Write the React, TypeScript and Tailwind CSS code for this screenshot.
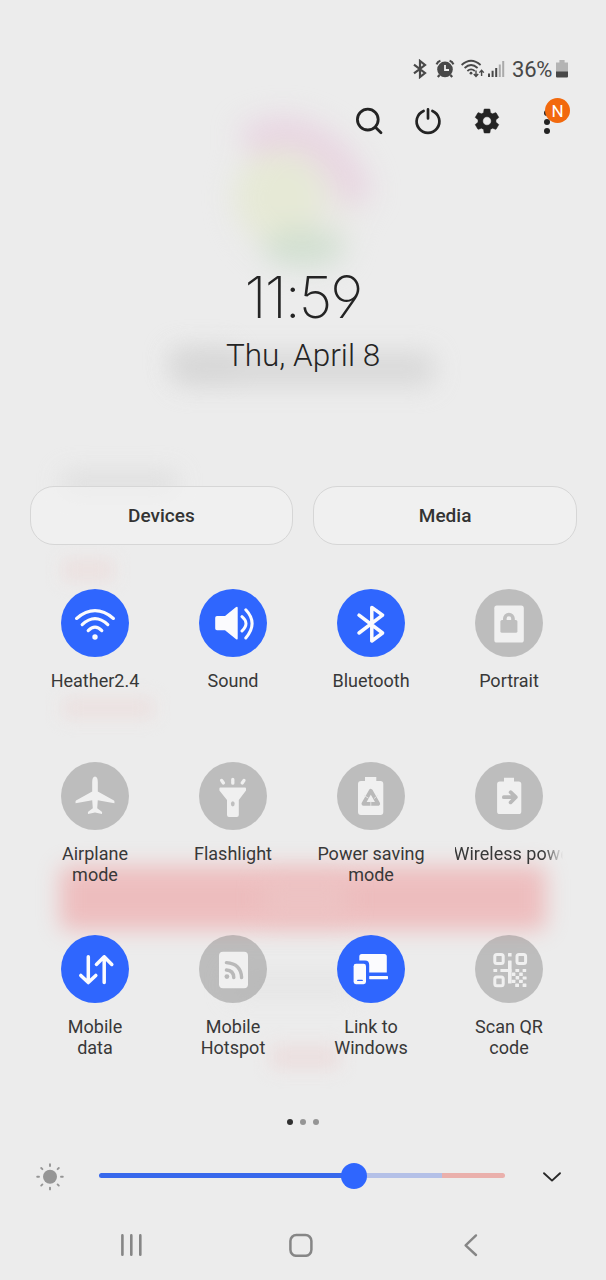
import type { ReactNode } from "react";

const QR_BITS: [number, number, number, number][] = [
  [33, 18, 3.6, 3.4],
  [33, 25.6, 3.6, 23],
  [25.4, 34, 11, 3],
  [18.4, 34, 3.8, 3],
  [40.4, 34, 3.8, 3],
  [47.6, 34, 3.6, 3],
  [36.8, 37.4, 3.6, 3.6],
  [44.2, 37.4, 3.6, 3.6],
  [40.6, 41, 3.6, 3.6],
  [47.6, 41.6, 4, 3],
  [36.6, 44.8, 3.8, 3.2],
  [44, 44.8, 3.8, 3.2],
  [40.2, 48.4, 3.8, 3.6],
  [47.6, 48.6, 3.8, 3.4],
];

const icons: Record<string, ReactNode> = {
  wifi: (
    <g fill="none" stroke="currentColor" strokeWidth="3.2" strokeLinecap="round">
      <path d="M15.6 29.4Q34 14 52.4 29.4" />
      <path d="M21.2 35.6Q34 23.6 46.8 35.6" />
      <path d="M27.2 41.6Q34 34.6 40.8 41.6" />
      <circle cx="34" cy="48" r="2.7" fill="currentColor" stroke="none" />
    </g>
  ),
  sound: (
    <g>
      <path d="M18 27H26L36.8 18.2Q38.7 17 38.7 19V49.5Q38.7 51.4 36.8 50L26 41.2H18Q16.2 41.2 16.2 39.4V28.8Q16.2 27 18 27Z" fill="currentColor" />
      <path d="M43 27.6Q51 34.2 43 42M46.8 20.8Q59.4 34.2 46.8 49" fill="none" stroke="currentColor" strokeWidth="3" strokeLinecap="round" />
    </g>
  ),
  bluetooth: (
    <path d="M22 26.2L45.6 44L34.8 52V18.4L45.6 26.2L22 44" fill="none" stroke="currentColor" strokeWidth="3.5" strokeLinecap="round" strokeLinejoin="round" />
  ),
  portrait: (
    <g>
      <rect x="19.3" y="16.6" width="29.5" height="37" rx="2.6" fill="currentColor" />
      <rect x="25.4" y="31" width="17" height="12.8" rx="1.6" fill="#bfbfbf" />
      <path d="M29.8 32V29.6a4.1 4.1 0 0 1 8.2 0V32" fill="none" stroke="#bfbfbf" strokeWidth="3.6" />
    </g>
  ),
  airplane: (
    <path d="M34 14.6Q36.8 15 36.8 20V29.4L53 38.6Q53.8 39.4 53.4 41.2L36.8 38.2L36.2 46.3L40.6 49.6Q41.4 50.6 41 52L34 50.4L27 52Q26.6 50.6 27.4 49.6L31.8 46.3L31.2 38.2L14.6 41.2Q14.2 39.4 15 38.6L31.2 29.4V20Q31.2 15 34 14.6Z" fill="currentColor" />
  ),
  flashlight: (
    <g>
      <path d="M21.4 25.6H46Q47 25.6 47 26.6V28.6L39.8 38V53Q39.8 55 37.8 55H30Q28 55 28 53V38L20.4 28.6V26.6Q20.4 25.6 21.4 25.6Z" fill="currentColor" />
      <ellipse cx="33.8" cy="41.8" rx="1.9" ry="2.6" fill="#bfbfbf" />
      <path d="M33.8 17.4V21.2M22.6 18.4L24.4 21M45 18.4L43.2 21" stroke="currentColor" strokeWidth="3.3" strokeLinecap="round" />
    </g>
  ),
  powersave: (
    <g>
      <path d="M28 15H39.3V19H43.4Q46.3 19 46.3 22V50Q46.3 53 43.4 53H24Q21 53 21 50V22Q21 19 24 19H28Z" fill="currentColor" />
      <path d="M33.8 28.8L41.2 41.8H26.4Z" fill="none" stroke="#b9b9b9" strokeWidth="3.8" strokeLinejoin="round" />
      <path d="M27.2 33.6L31.6 36.2M40.6 33.6L37 36.6M33.8 39.6V44" stroke="#e2e2e2" strokeWidth="1" />
    </g>
  ),
  wireless: (
    <g>
      <path d="M29 15.8H39V19.4H43.6Q46.3 19.4 46.3 22V49.4Q46.3 52 43.6 52H24.8Q22.1 52 22.1 49.4V22Q22.1 19.4 24.8 19.4H29Z" fill="currentColor" />
      <path d="M28.8 35.2H40.4M35.6 30.2L40.8 35.2L35.6 40.4" fill="none" stroke="#b9b9b9" strokeWidth="3.7" strokeLinecap="round" strokeLinejoin="round" />
    </g>
  ),
  data: (
    <path d="M27.3 21.8V47.4M19.8 40.4L27.3 47.6L34.8 40.4M43.2 47.6V21.8M35.4 29.4L43.2 21.8L50.8 29.4" fill="none" stroke="currentColor" strokeWidth="3.5" strokeLinecap="round" strokeLinejoin="round" />
  ),
  hotspot: (
    <g>
      <rect x="20" y="16.8" width="29" height="36.4" rx="4" fill="currentColor" />
      <circle cx="27.9" cy="41.6" r="2.4" fill="#b9b9b9" />
      <path d="M27.4 35Q34.6 35.4 34.8 42.6M27.4 27.6Q42 28.6 42.6 42.6" fill="none" stroke="#b9b9b9" strokeWidth="3.4" strokeLinecap="round" />
    </g>
  ),
  link: (
    <g fill="currentColor">
      <path d="M22.3 25.4V21.5Q22.3 19 24.8 19H47.3Q49.8 19 49.8 21.5V37.4H32.2V29.8Q32.2 25.4 28 25.4Z" />
      <rect x="16.6" y="28.8" width="12.4" height="20.4" rx="2.4" />
      <path d="M20.8 45.4H25.2" stroke="#2f66fe" strokeWidth="1.4" strokeLinecap="round" />
      <rect x="32.2" y="41" width="18.8" height="3.2" rx="0.6" />
    </g>
  ),
  qr: (
    <g>
      <g fill="none" stroke="currentColor" strokeWidth="3">
        <rect x="19.8" y="19.6" width="8.4" height="9" rx="2" />
        <rect x="42" y="19.6" width="8.6" height="9" rx="2" />
        <rect x="19.8" y="42" width="8.4" height="8.8" rx="2" />
      </g>
      {QR_BITS.map(([x, y, w, h]) => (
        <rect key={`${x}-${y}`} x={x} y={y} width={w} height={h} rx="0.5" fill="currentColor" />
      ))}
    </g>
  ),
};

type Tile = { icon: string; lines: string[]; on?: boolean; faded?: boolean };

const tiles: Tile[] = [
  { icon: "wifi", lines: ["Heather2.4"], on: true },
  { icon: "sound", lines: ["Sound"], on: true },
  { icon: "bluetooth", lines: ["Bluetooth"], on: true },
  { icon: "portrait", lines: ["Portrait"] },
  { icon: "airplane", lines: ["Airplane", "mode"] },
  { icon: "flashlight", lines: ["Flashlight"] },
  { icon: "powersave", lines: ["Power saving", "mode"] },
  { icon: "wireless", lines: ["Wireless powe"], faded: true },
  { icon: "data", lines: ["Mobile", "data"], on: true },
  { icon: "hotspot", lines: ["Mobile", "Hotspot"] },
  { icon: "link", lines: ["Link to", "Windows"], on: true },
  { icon: "qr", lines: ["Scan QR", "code"] },
];

function Backdrop() {
  return (
    <div className="pointer-events-none absolute inset-0 overflow-hidden" aria-hidden="true">
      <svg className="absolute left-[180px] top-[80px] blur-[14px]" width="250" height="220" viewBox="0 0 250 220" fill="none">
        <circle cx="116" cy="118" r="62" fill="#e9e9e4" />
        <path d="M66 64Q106 40 144 68Q172 92 176 122" stroke="#e8cbde" strokeWidth="33" opacity="0.68" />
        <circle cx="98" cy="116" r="44" fill="#e5e9d2" opacity="0.8" />
        <ellipse cx="124" cy="168" rx="42" ry="19" fill="#ccddcc" opacity="0.85" />
      </svg>
      <div className="absolute left-[168px] top-[346px] h-[30px] w-[68px] rounded-lg bg-[#d8d8d8] opacity-60 blur-[12px]" />
      <div className="absolute left-[174px] top-[352px] h-[34px] w-[260px] rounded-lg bg-[#d4d4d4] opacity-80 blur-[13px]" />
      <div className="absolute left-[62px] top-[472px] h-[22px] w-[115px] bg-[#dbdbdb] opacity-80 blur-[12px]" />
      <div className="absolute left-[62px] top-[559px] h-[22px] w-[52px] bg-[#ecdfde] opacity-90 blur-[9px]" />
      <div className="absolute left-[62px] top-[698px] h-[20px] w-[92px] bg-[#ecdfde] opacity-90 blur-[9px]" />
      <div className="absolute left-[60px] top-[866px] h-[64px] w-[486px] rounded-lg bg-[#eeb9ba] opacity-90 blur-[11px]" />
      <div className="absolute left-[262px] top-[880px] h-[38px] w-[86px] bg-[#edc8c8] opacity-60 blur-[12px]" />
      <div className="absolute left-[230px] top-[972px] h-[26px] w-[130px] bg-[#e4e4e4] opacity-70 blur-[12px]" />
      <div className="absolute left-[270px] top-[1045px] h-[24px] w-[70px] bg-[#ecdddd] opacity-90 blur-[9px]" />
    </div>
  );
}

function StatusBar() {
  return (
    <div className="flex h-[22px] items-center justify-end pr-[38px] text-[#484848]">
      <svg width="14" height="20" viewBox="0 0 14 20" fill="none" stroke="currentColor" strokeWidth="2.2">
        <path d="M1 5.6L12 14L7 18V2L12 6L1 14.4" />
      </svg>
      <svg className="ml-[8px]" width="20" height="20" viewBox="0 0 20 20">
        <circle cx="10" cy="10.4" r="7.8" fill="currentColor" />
        <path d="M1.6 5.4Q2.6 2.6 5.4 1.8M18.4 5.4Q17.4 2.6 14.6 1.8M4.6 16L2.8 18M15.4 16L17.2 18" stroke="currentColor" strokeWidth="2.2" fill="none" />
        <path d="M10 6V11H14" fill="none" stroke="#eee" strokeWidth="1.8" />
      </svg>
      <svg className="ml-[6px]" width="24" height="20" viewBox="0 0 24 20" fill="none" stroke="currentColor" strokeWidth="1.8">
        <path d="M.6 6Q10 -2.6 19.6 6M3.6 9Q10 3 16.6 9M6.4 12Q10 8.8 13.8 12" />
        <circle cx="10" cy="14.2" r="1.4" fill="currentColor" stroke="none" />
        <path d="M15 11.4V17M12.8 15L15 17.4L17.2 15M20.6 17V11.4M18.4 13.6L20.6 11.2L22.8 13.6" strokeWidth="1.4" />
      </svg>
      <svg className="ml-[3px]" width="17" height="20" viewBox="0 0 17 20">
        <path d="M1 14.6V18M4.6 11.8V18M8.2 9V18" stroke="currentColor" strokeWidth="2" />
        <path d="M11.8 5.4V18M15.2 2V18" stroke="#aaa" strokeWidth="2" />
      </svg>
      <span className="ml-[7px] w-[41px] whitespace-nowrap pt-px text-[22px] leading-[22px] tracking-[-0.2px]">36%</span>
      <svg className="ml-[3px]" width="12" height="20" viewBox="0 0 12 20">
        <path d="M3.4 1H8.6V3.4H12V13H0V3.4H3.4Z" fill="#b4b4b4" />
        <path d="M0 12.6H12V17.6Q12 18.6 11 18.6H1Q0 18.6 0 17.6Z" fill="currentColor" />
      </svg>
    </div>
  );
}

function Toolbar() {
  return (
    <div className="mt-[26px] flex h-[30px] items-center justify-end pr-[49px] text-[#232323]">
      <svg width="30" height="30" viewBox="0 0 30 30" fill="none" stroke="currentColor" strokeWidth="2.8" strokeLinecap="round">
        <circle cx="13.8" cy="13.6" r="10.4" />
        <path d="M21.4 21.2L27 26.8" />
      </svg>
      <svg className="ml-[29px]" width="30" height="30" viewBox="0 0 30 30" fill="none" stroke="currentColor" strokeWidth="2.7" strokeLinecap="round">
        <path d="M10.6 4.9a11.4 11.4 0 1 0 8.8 0M15 3.4V12.4" />
      </svg>
      <svg className="ml-[29.5px]" width="30" height="30" viewBox="0 0 24 24" fill="currentColor" stroke="currentColor" strokeWidth="0.4">
        <path d="M19.14 12.94c.04-.3.06-.61.06-.94 0-.32-.02-.64-.07-.94l2.03-1.58a.49.49 0 0 0 .12-.61l-1.92-3.32a.488.488 0 0 0-.59-.22l-2.39.96c-.5-.38-1.03-.7-1.62-.94l-.36-2.54a.484.484 0 0 0-.48-.41h-3.84c-.24 0-.43.17-.47.41l-.36 2.54c-.59.24-1.13.57-1.62.94l-2.39-.96c-.22-.08-.47 0-.59.22L2.74 8.87c-.12.21-.08.47.12.61l2.03 1.58c-.05.3-.09.63-.09.94s.02.64.07.94l-2.03 1.58a.49.49 0 0 0-.12.61l1.92 3.32c.12.22.37.29.59.22l2.39-.96c.5.38 1.03.7 1.62.94l.36 2.54c.05.24.24.41.48.41h3.84c.24 0 .44-.17.47-.41l.36-2.54c.59-.24 1.13-.56 1.62-.94l2.39.96c.22.08.47 0 .59-.22l1.92-3.32c.12-.22.07-.47-.12-.61l-2.01-1.58zM12 15.4A3.4 3.4 0 1 1 12 8.6a3.4 3.4 0 0 1 0 6.8z" />
      </svg>
      <div className="relative ml-[35px] flex h-[30px] w-[20px] flex-col items-center justify-center gap-[3px] pt-px">
        <i className="size-[6px] rounded-full bg-[#232323]" />
        <i className="size-[6px] rounded-full bg-[#232323]" />
        <i className="size-[6px] rounded-full bg-[#232323]" />
        <span className="absolute left-[8px] top-[-8px] flex size-[25px] items-center justify-center rounded-full bg-[#f2690d] pt-px text-[17px] leading-none text-white">N</span>
      </div>
    </div>
  );
}

export default function App() {
  return (
    <main className="relative h-[1280px] w-[606px] overflow-hidden bg-[#ececec] font-['Roboto',sans-serif]">
      <Backdrop />
      <div className="relative flex h-full flex-col pt-[58px]">
        <StatusBar />
        <Toolbar />
        <div className="flex flex-col items-center text-[#242424]">
          <div className="mt-[129px] flex h-[64px] items-center whitespace-nowrap font-['Inter',sans-serif] text-[58px] font-[150] leading-[64px] tracking-[-2px] [font-feature-settings:'cv04'_1,'ss01'_1]">
            11:59
          </div>
          <div className="mt-[7px] h-[40px] whitespace-nowrap text-[31.5px] font-light leading-[40px]">Thu, April 8</div>
        </div>

        <div className="mt-[110px] flex gap-[20px] pl-[29.5px] pr-[29px]">
          {["Devices", "Media"].map((label) => (
            <button key={label} className="h-[59px] flex-1 rounded-[24px] border border-[#d6d6d6] bg-[#f2f2f2]/65 pt-[2px] text-[19px] font-medium text-[#333]">
              {label}
            </button>
          ))}
        </div>

        <div className="ml-[25.5px] mt-[44px] grid w-[552px] grid-cols-4 grid-rows-[173px_173px_173px]">
          {tiles.map((tile) => (
            <div key={tile.icon} className="flex flex-col items-center">
              <div className={tile.on ? "size-[68px] rounded-full bg-[#2f66fe] text-[#fbfbfe]" : "size-[68px] rounded-full bg-[#707070]/38 text-[#f0f0f0]"}>
                <svg width="68" height="68" viewBox="0 0 68 68">{icons[tile.icon]}</svg>
              </div>
              <div
                className={
                  tile.faded
                    ? "mt-[12.5px] w-[108px] overflow-hidden whitespace-nowrap text-[18px] leading-[21.5px] text-[#383838] mask-r-from-82% mask-r-to-100%"
                    : "mt-[12.5px] whitespace-nowrap pl-px text-center text-[18px] leading-[21.5px] text-[#383838]"
                }
              >
                {tile.lines.map((line) => (
                  <div key={line} className={tile.faded ? "-ml-px" : ""}>{line}</div>
                ))}
              </div>
            </div>
          ))}
        </div>

        <div className="mt-[11px] flex justify-center gap-[7px]">
          <i className="size-[6px] rounded-full bg-[#303030]" />
          <i className="size-[6px] rounded-full bg-[#959595]" />
          <i className="size-[6px] rounded-full bg-[#959595]" />
        </div>

        <div className="mt-[34.5px] flex h-[32px] items-center">
          <svg className="ml-[34px]" width="32" height="32" viewBox="0 0 32 32" fill="#959595" stroke="#959595" strokeWidth="1.9" strokeLinecap="round">
            <circle cx="16" cy="16.8" r="7" stroke="none" />
            <path d="M16 4.2V6M16 27.6V29.4M3.2 16.8H5M27 16.8H28.8M7.2 8L8.4 9.2M23.6 24.4L24.8 25.6M24.8 8L23.6 9.2M8.4 24.4L7.2 25.6" />
          </svg>
          <div className="relative ml-[33px] flex h-[5px] w-[406px] overflow-visible">
            <div className="w-[255px] rounded-l-full bg-[#3768ec]" />
            <div className="w-[88px] bg-[#b4c0e7]" />
            <div className="flex-1 rounded-r-full bg-[#eab0ac]" />
            <i className="absolute left-[241.5px] top-[-10.5px] size-[26px] rounded-full bg-[#2f66fe]" />
          </div>
          <svg className="ml-[36px]" width="22" height="16" viewBox="0 0 22 16" fill="none" stroke="#282828" strokeWidth="1.9" strokeLinecap="round" strokeLinejoin="round">
            <path d="M3 5.2L11 12.6L19 5.2" />
          </svg>
        </div>

        <div className="mt-[41px] flex h-[50px] items-start text-[#868686]">
          <svg className="ml-[119px]" width="24" height="24" viewBox="0 0 24 24" fill="none" stroke="currentColor" strokeWidth="2.6" strokeLinecap="round">
            <path d="M3.4 2.4V21.8M12.3 2.4V21.8M21.3 2.4V21.8" />
          </svg>
          <svg className="ml-[146px]" width="24" height="24" viewBox="0 0 24 24" fill="none" stroke="currentColor" strokeWidth="2.5">
            <rect x="1.4" y="2" width="21" height="20.8" rx="6" />
          </svg>
          <svg className="ml-[148px]" width="24" height="24" viewBox="0 0 24 24" fill="none" stroke="currentColor" strokeWidth="2.4" strokeLinecap="round" strokeLinejoin="round">
            <path d="M15 2.4L4.6 12.4L15 22" />
          </svg>
        </div>
      </div>
    </main>
  );
}
